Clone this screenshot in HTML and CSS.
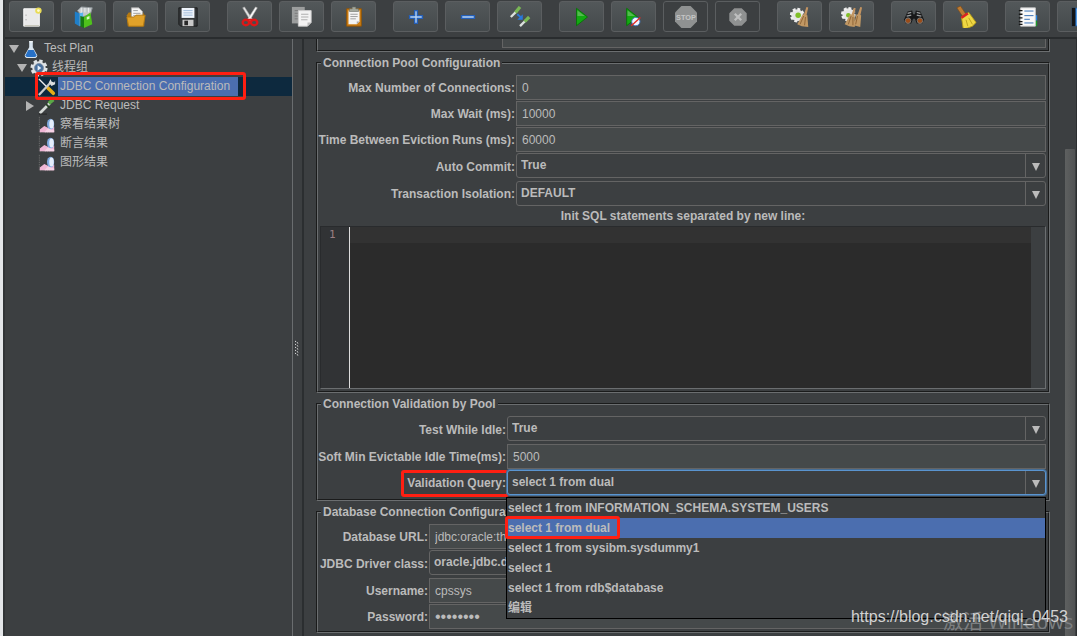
FILE: index.html
```html
<!DOCTYPE html>
<html lang="zh-CN">
<head>
<meta charset="utf-8">
<title>JDBC Connection Configuration</title>
<link rel="stylesheet" href="styles.css">
</head>
<body>
<div class="backdrop"></div>
<div class="app">
  <header class="toolbar">
    <div class="group">
      <button class="tool" aria-label="New"><svg viewBox="0 0 24 24"><path d="M3 3h17v19H3z" fill="#e9e9e9" stroke="#fff"/><path d="M4 21.500h16" stroke="#b9b9a9"/><path d="M5 10h1M5 15h1" stroke="#888"/><circle cx="19" cy="5" r="3.500" fill="#e9dc58"/><circle cx="19" cy="5" r="1.500" fill="#fffbd0"/></svg></button>
      <button class="tool" aria-label="Templates"><svg viewBox="0 0 24 24"><path d="M5 5l4-4 12 1-2 7-9 3z" fill="#c4c8ca" stroke="#8e9599"/><path d="M9 2v6M13 2v5M17 2v5" stroke="#eef1f2"/><path d="M2 6l5 2v14l-5-3z" fill="#1f7fc9"/><path d="M7 8l4-1v14l-4 1z" fill="#5bb5ee"/><path d="M8 11l4 1v12l-4-2z" fill="#167a12"/><path d="M12 12l7-5 1 6 1 7-9 4z" fill="#4fc21c"/><path d="M15 12l3-1v3l-3 1z" fill="#d9f6c8"/></svg></button>
      <button class="tool" aria-label="Open"><svg viewBox="0 0 24 24"><path d="M2 10l2-3h16l1 4v11H3z" fill="#b67a12"/><path d="M7 2h8l4 4v9H7z" fill="#f6f6f6" stroke="#aaa"/><path d="M9 5h5M9 8h8M9 10.500h8" stroke="#999"/><path d="M2 12h8l2-2h10l-2 12H4z" fill="#e0a129" stroke="#b57a10"/></svg></button>
      <button class="tool" aria-label="Save"><svg viewBox="0 0 24 24"><path d="M2 2h20v20H4l-2-2z" fill="#35383a" stroke="#191a1b"/><path d="M5 2h14v11H5z" fill="#eef4fb"/><path d="M7 5h10M7 7.500h10M7 10h10" stroke="#9bb7d8"/><path d="M6 15h12v7H6z" fill="#c9c9c9"/><path d="M8 16h4v5H8z" fill="#292929"/></svg></button>
    </div>
    <div class="group">
      <button class="tool" aria-label="Cut"><svg viewBox="0 0 24 24"><path d="M4 2l2-1 9 14-2 2z" fill="#e4e4e4" stroke="#a4a4a4" stroke-width=".6"/><path d="M20 2l-2-1-9 14 2 2z" fill="#f8f8f8" stroke="#aaa" stroke-width=".6"/><ellipse cx="7.500" cy="18" rx="3.500" ry="3" fill="none" stroke="#de1717" stroke-width="2.500"/><ellipse cx="16.500" cy="18" rx="3.500" ry="3" fill="none" stroke="#de1717" stroke-width="2.500"/><path d="M10 14h4l1 2H9z" fill="#de1717"/></svg></button>
      <button class="tool" aria-label="Copy"><svg viewBox="0 0 24 24"><path d="M1 1h14v18H1z" fill="#9b9d9d"/><path d="M4 5h8M4 8h4M4 11h4M4 14h4" stroke="#777"/><path d="M8 5h14v13l-4 4H8z" fill="#f3f3f3" stroke="#ccc"/><path d="M11 9h8M11 12h8M11 15h7" stroke="#aaa"/><path d="M18 22v-4h4z" fill="#bbb"/></svg></button>
      <button class="tool" aria-label="Paste"><svg viewBox="0 0 24 24"><path d="M4 3h16v19H4z" fill="#cd7e15" stroke="#905405"/><path d="M6 5h12v12l-3 3H6z" fill="#f4f4f4"/><path d="M8 9h8M8 11.500h8M8 14h6" stroke="#999"/><path d="M15 20v-3h3z" fill="#aaa"/><path d="M7 3h3V1h4v2h3v3H7z" fill="#a2a69b" stroke="#656960" stroke-width=".6"/></svg></button>
    </div>
    <div class="group">
      <button class="tool" aria-label="Expand all"><svg viewBox="0 0 24 24"><path d="M10.500 5h3v5.500H19v3h-5.500V19h-3v-5.500H5v-3h5.500z" fill="#b7d3f4" stroke="#245fb9" stroke-width="1.500"/></svg></button>
      <button class="tool" aria-label="Collapse all"><svg viewBox="0 0 24 24"><path d="M5 10.500h14v3H5z" fill="#b7d3f4" stroke="#245fb9" stroke-width="1.500"/></svg></button>
      <button class="tool" aria-label="Toggle"><svg viewBox="0 0 24 24"><path d="M2 12l7-7" stroke="#dce1de" stroke-width="2.500"/><path d="M7 7l5-6" stroke="#79b755" stroke-width="3.500"/><path d="M12 22l7-7" stroke="#dce1de" stroke-width="2.500"/><path d="M17 17l5-5" stroke="#79b755" stroke-width="3.500"/><path d="M9 9l5 4" stroke="#2878dc" stroke-width="2"/><path d="M15 9v6H9z" fill="#2878dc"/></svg></button>
    </div>
    <div class="group">
      <button class="tool" aria-label="Start"><svg viewBox="0 0 24 24"><path d="M6 2.500L18 12 6 21.500z" fill="#13a912" stroke="#087108"/><path d="M7 5l8 6H7z" fill="#55b850"/></svg></button>
      <button class="tool" aria-label="Start no pauses"><svg viewBox="0 0 24 24"><path d="M4 2.500L16 12 4 21.500z" fill="#13a912" stroke="#087108"/><path d="M5 5l8 6H5z" fill="#55b850"/><circle cx="14" cy="17" r="4.500" fill="#f2f6ff" stroke="#3d78c5"/><path d="M9 21.500l10-9" stroke="#e12b25" stroke-width="1.500"/></svg></button>
      <button class="tool flat" aria-label="Stop"><svg class="stop" viewBox="0 0 24 24"><path d="M7 0h10l7 7v10l-7 7H7l-7-7V7z" fill="#8f9191"/><text x="12" y="15">STOP</text></svg></button>
      <button class="tool flat" aria-label="Shutdown"><svg viewBox="0 0 24 24"><path d="M8 2.500h8L21.500 8v8L16 21.500H8L2.500 16V8z" fill="#8f9191"/><path d="M8.500 8.500l7 7M15.500 8.500l-7 7" stroke="#bebfbf" stroke-width="2.500"/></svg></button>
    </div>
    <div class="group">
      <button class="tool" aria-label="Clear"><svg viewBox="0 0 24 24"><circle cx="9" cy="10" r="6.500" fill="#e5e5e5" stroke="#eee" stroke-width="3" stroke-dasharray="3 2"/><circle cx="10" cy="10" r="3" fill="#80bf28"/><path d="M19 1l2 .5-2 9-3-.5z" fill="#c39461"/><path d="M15 9l5 1 1 13-7-1-5-2z" fill="#c19864"/><path d="M16 11l-4 9M18 12l-1 9" stroke="#8d6335"/></svg></button>
      <button class="tool" aria-label="Clear all"><svg viewBox="0 0 24 24"><circle cx="8" cy="9" r="6.500" fill="#e5e5e5" stroke="#eee" stroke-width="3" stroke-dasharray="3 2"/><circle cx="8" cy="10" r="2.500" fill="#80bf28"/><path d="M14 2l2 .5-2 9-3-.5zM21 1l2 .5-2 9-3-.5z" fill="#c39461"/><path d="M10 9l5 1v13l-6-1-5-2zM17 9l5 1-1 13-7-2z" fill="#c19864"/><path d="M11 11l-3 9M13 12v9M18 11l-2 9" stroke="#8d6335"/></svg></button>
    </div>
    <div class="group">
      <button class="tool" aria-label="Search"><svg viewBox="0 0 24 24"><path d="M5 6l5-1 1 4h2l1-4 5 1 4 9-2 4h-6l-2-5h-2l-2 5H3l-2-4z" fill="#171819"/><path d="M5 8l4-1M15 7l4 1M4 11l5-1M15 10l5 1" stroke="#9a9d9f" stroke-width="1.500"/><circle cx="5.500" cy="16" r="3" fill="#9a4c19" stroke="#77797a"/><circle cx="18.500" cy="16" r="3" fill="#9a4c19" stroke="#77797a"/></svg></button>
      <button class="tool" aria-label="Reset search"><svg viewBox="0 0 24 24"><path d="M2 2l4-2 6 9-4 2z" fill="#bd7b32" stroke="#7f4b16" stroke-width=".7"/><path d="M7 12l8-5 8 11-4 4-5 2-5 1z" fill="#efd743" stroke="#b59a18"/><path d="M12 15l2 7M15 13l4 7" stroke="#b89f1d"/><path d="M6 12l7-5 2 2-7 5z" fill="#db2222"/></svg></button>
    </div>
    <div class="group">
      <button class="tool" aria-label="Function helper"><svg viewBox="0 0 24 24"><path d="M19 10h3v6h-3z" fill="#2685e4"/><path d="M19 16h3v6h-3z" fill="#1c9a29"/><path d="M4 2h16v20H4z" fill="#fafafa" stroke="#ccc"/><path d="M8 5.500h10M8 10.500h10M8 14.500h6M8 18.500h10" stroke="#2a65ad"/><path d="M2 5h4M2 9h4M2 13h4M2 17h4M2 20h4" stroke="#161616" stroke-width="1.500"/></svg></button>
      <button class="tool" aria-label="Help"><svg viewBox="0 0 24 24"><path d="M3 2h18v20H3z" fill="#2674cc"/><path d="M3 2h4v20H3z" fill="#141516"/><path d="M8 3h2v18H8z" fill="#69aef0"/></svg></button>
    </div>
  </header>

  <main class="workspace">
    <nav class="tree">
      <div class="node"><span class="toggle open"></span><svg viewBox="0 0 20 20"><path d="M8 1h4v7l5 9q0 3-2 3H5q-2 0-2-3l5-9z" fill="#d8e4ef"/><path d="M7 11h6l3 6q0 2-2 2H6q-2 0-2-2z" fill="#2670c6"/><path d="M8 2h4" stroke="#fff"/></svg><span class="name">Test Plan</span></div>
      <div class="node level-1"><span class="toggle open"></span><svg viewBox="0 0 20 20"><circle cx="10" cy="10" r="7.500" fill="#dfe3e6" stroke="#dfe3e6" stroke-width="4" stroke-dasharray="3.500 2.390"/><circle cx="10" cy="10" r="5" fill="#48709f" stroke="#8291a5"/><path d="M8.500 7l4 3-4 3z" fill="#e5effa"/></svg><span class="name">线程组</span></div>
      <div class="node level-2 selected"><span class="toggle"></span><svg viewBox="0 0 20 20"><path d="M1 1l10 10" stroke="#eee" stroke-width="1.500"/><path d="M11 11l6 6" stroke="#e5ad18" stroke-width="4" stroke-linecap="round"/><path d="M1 19L14 5" stroke="#c8cbcc" stroke-width="2.500"/><path d="M12 5l2-4 1 3 3 1 1-2v4l-4 2z" fill="#dedfdf"/></svg><span class="name">JDBC Connection Configuration</span></div>
      <div class="node level-2"><span class="toggle closed"></span><svg viewBox="0 0 20 20"><path d="M2 18L13 7" stroke="#d5d9d7" stroke-width="3"/><path d="M9 8l4 4" stroke="#263f24" stroke-width="2"/><path d="M12 7l5-4" stroke="#5aa846" stroke-width="4"/><path d="M1 19h9" stroke="#222"/></svg><span class="name">JDBC Request</span></div>
      <div class="node level-2"><span class="toggle"></span><svg viewBox="0 0 20 20"><use href="#chart"/></svg><span class="name">察看结果树</span></div>
      <div class="node level-2"><span class="toggle"></span><svg viewBox="0 0 20 20"><use href="#chart"/></svg><span class="name">断言结果</span></div>
      <div class="node level-2"><span class="toggle"></span><svg viewBox="0 0 20 20"><use href="#chart"/></svg><span class="name">图形结果</span></div>
    </nav>
    <div class="divider"><svg viewBox="0 0 5 16"><path d="M0 1l4 3M0 4l4 3M0 7l4 3M0 10l4 3M0 13l4 3" stroke="#e5e5e5" stroke-dasharray="1.500 1"/></svg></div>

    <form class="panel">
      <div class="cut"><input class="text" aria-label="Variable Name"></div>

      <fieldset class="box pool">
        <legend>Connection Pool Configuration</legend>
        <label for="max">Max Number of Connections:</label><input class="text" id="max" value="0">
        <label for="wait">Max Wait (ms):</label><input class="text" id="wait" value="10000">
        <label for="evict">Time Between Eviction Runs (ms):</label><input class="text" id="evict" value="60000">
        <label for="commit">Auto Commit:</label>
        <div class="combo gap-after"><select id="commit"><option>True</option></select><i></i></div>
        <label for="isolation">Transaction Isolation:</label>
        <div class="combo"><select id="isolation"><option>DEFAULT</option></select><i></i></div>
        <label class="wide" for="sql">Init SQL statements separated by new line:</label>
        <div class="editor"><span class="line-no">1</span><textarea id="sql"></textarea></div>
      </fieldset>

      <fieldset class="box validation">
        <legend>Connection Validation by Pool</legend>
        <label for="idle">Test While Idle:</label>
        <div class="combo gap-after"><select id="idle"><option>True</option></select><i></i></div>
        <label for="soft">Soft Min Evictable Idle Time(ms):</label><input class="text" id="soft" value="5000">
        <label class="marked" for="query">Validation Query:</label>
        <div class="combo focused"><select id="query"><option>select 1 from dual</option></select><i></i>
          <ul class="popup" role="listbox">
            <li role="option">select 1 from INFORMATION_SCHEMA.SYSTEM_USERS</li>
            <li role="option" class="current" aria-selected="true">select 1 from dual</li>
            <li role="option">select 1 from sysibm.sysdummy1</li>
            <li role="option">select 1</li>
            <li role="option">select 1 from rdb$database</li>
            <li role="option">编辑</li>
          </ul>
        </div>
      </fieldset>

      <fieldset class="box database">
        <legend>Database Connection Configuration</legend>
        <label for="url">Database URL:</label><input class="text" id="url" value="jdbc:oracle:thin">
        <label for="driver">JDBC Driver class:</label>
        <div class="combo gap-after"><select id="driver"><option>oracle.jdbc.driver</option></select><i></i></div>
        <label for="user">Username:</label><input class="text" id="user" value="cpssys">
        <label for="pass">Password:</label><input class="text" id="pass" type="password" value="password">
      </fieldset>
    </form>
    <div class="scrollbar"><div class="thumb"></div></div>
  </main>
</div>
<div class="activate">激活 Windows</div>
<div class="watermark">https://blog.csdn.net/qiqi_0453</div>
<svg class="defs"><defs><g id="chart"><path d="M1.500 1v17.500H18" fill="none" stroke="#777" stroke-dasharray="1 1"/><path d="M2 18v-3l5-4 4 2 7-1v6z" fill="#f0b6d6"/><ellipse cx="14" cy="9" rx="4" ry="6" fill="#7fa9e0"/><ellipse cx="15" cy="9" rx="2.500" ry="5" fill="#e6eefb"/><path d="M7 18l4-4 7 2v2z" fill="#f6d3e6"/></g></defs></svg>
</body>
</html>
```
FILE: styles.css
```css
*, *::before, *::after { box-sizing: border-box; }

body {
  margin: 0;
  height: 100vh;
  display: flex;
  overflow: hidden;
  position: relative;
  background: #3c3f41;
  color: #bbbbbb;
  font: bold 12px/16px "Liberation Sans", "Noto Sans CJK SC", sans-serif;
}

input, select, textarea, button { font: inherit; color: inherit; margin: 0; }

.backdrop { width: 3px; background: #e4e6e8; }
.app { flex: 1; min-width: 0; display: flex; flex-direction: column; border-left: 2px solid #313436; }

/* Toolbar */
.toolbar {
  flex: none;
  display: flex;
  gap: 17px;
  height: 39px;
  padding: 1px 0 0 4px;
  border-bottom: 2px solid #292c2e;
  overflow: hidden;
}
.group { display: flex; gap: 7px; flex: none; }
.tool {
  width: 45px;
  height: 31px;
  padding: 0;
  display: grid;
  place-items: center;
  border: 1px solid #5b5e60;
  border-radius: 3px;
  background: linear-gradient(#53585a, #44494b);
}
.tool.flat { background: #3c3f41; }
.tool svg { width: 22px; height: 22px; }
.stop text { font: bold 8px "Liberation Sans", sans-serif; fill: #c4c5c5; text-anchor: middle; }

/* Tree */
.workspace { flex: 1; min-height: 0; display: flex; }
.tree { width: 288px; flex: none; border-right: 1px solid #6a6d6f; font-weight: normal; }
.node { height: 19px; padding-left: 4px; display: flex; align-items: center; }
.node svg { width: 18px; height: 18px; margin: 0 2px; flex: none; }
.level-1 { padding-left: 12px; }
.level-2 { padding-left: 20px; }
.toggle { width: 10px; margin-right: 1px; display: grid; place-items: center; }
.open::before { content: ""; border: 5px solid transparent; border-top: 8px solid #b3b3b3; border-bottom: 0; }
.closed::before { content: ""; border: 5px solid transparent; border-left: 8px solid #b3b3b3; border-right: 0; }
.name { line-height: 19px; padding: 0 8px 0 2px; }
.selected { background: #0d293e; position: relative; }
.selected .name { background: #4b6eaf; }
.selected::after, .marked::after, .current::after {
  content: "";
  position: absolute;
  border: 3px solid #ff1f12;
  border-radius: 3px;
}
.selected::after { left: 30px; top: -5px; width: 211px; height: 28px; }

.divider {
  width: 11px;
  flex: none;
  padding-top: 20px;
  display: grid;
  place-items: center;
  border-right: 2px solid #2b2e30;
}
.divider svg { width: 5px; height: 16px; }

/* Form */
.panel { flex: 1; min-width: 0; padding: 0 15px 0 12px; }
.cut {
  height: 13px;
  padding: 0 2px 0 184px;
  border: 2px groove #6b6e70;
  border-top: 0;
  margin-bottom: 3px;
}
.cut .text { height: 9px; border-top: 0; }
.box {
  min-width: 0;
  margin: 0 0 3px;
  padding: 4px 2px 2px;
  border: 2px groove #6b6e70;
  display: grid;
  row-gap: 1px;
  column-gap: 1px;
  align-items: center;
}
.pool { grid-template-columns: 195px 1fr; }
.validation { grid-template-columns: 186px 1fr; padding-bottom: 4px; }
.database { grid-template-columns: 108px 1fr; }
.box legend { padding: 0 2px; margin-left: 1px; }
.box label { display: flex; justify-content: flex-end; white-space: nowrap; }
.box .wide { grid-column: 1 / -1; justify-content: center; line-height: 18px; }
.text {
  width: 100%;
  height: 25px;
  padding: 0 5px;
  border: 1px solid #646464;
  background: #45494a;
  font-weight: normal;
  outline: 0;
  display: block;
}
.text[type="password"] { font-size: 16px; }
.combo { position: relative; height: 25px; }
.gap-after { margin-bottom: 2px; }
.combo select {
  appearance: none;
  width: 100%;
  height: 25px;
  padding: 0 24px 2px 4px;
  border: 1px solid #646464;
  border-radius: 3px;
  background: #3c3f41;
  outline: 0;
  display: block;
}
.combo i {
  position: absolute;
  right: 1px;
  top: 1px;
  bottom: 1px;
  width: 20px;
  padding-top: 3px;
  border-left: 1px solid #646464;
  display: grid;
  place-items: center;
  pointer-events: none;
}
.combo i::before { content: ""; border: 4px solid transparent; border-top: 8px solid #bbbbbb; border-bottom: 0; }
.focused select { border-color: #5a94cf; box-shadow: 0 0 0 1px #466d94; }

.editor {
  grid-column: 1 / -1;
  display: flex;
  height: 163px;
  border: 1px solid #292b2d;
  border-right-color: #6b6e70;
  border-bottom-color: #6b6e70;
  background: #2b2b2b;
}
.line-no { width: 28px; padding-left: 8px; background: #313335; color: #9a7f83; font: 11px/16px "DejaVu Sans Mono", monospace; }
.editor textarea {
  flex: 1;
  padding: 0;
  border: 0;
  border-left: 1px solid #dddddd;
  resize: none;
  outline: 0;
  background: linear-gradient(#323232 16px, #2b2b2b 16px);
}
.editor::after { content: ""; width: 14px; background: #3c3f41; }

.marked { position: relative; }
.marked::after { right: -3px; top: -5px; width: 108px; height: 27px; }

.popup {
  position: absolute;
  z-index: 2;
  left: -1px;
  right: 0;
  top: 27px;
  margin: 0;
  padding: 0;
  list-style: none;
  border: 1px solid #000;
  background: #3c3f41;
}
.popup li { height: 20px; line-height: 20px; padding-left: 1px; }
.popup .current { background: #4b6eaf; position: relative; }
.current::after { left: -2px; top: -2px; width: 115px; height: 23px; }

.scrollbar { width: 12px; flex: none; padding-top: 110px; display: flex; border-right: 1px solid #2b2e30; }
.thumb { width: 10px; background: linear-gradient(90deg, #5e6060, #515354); border-radius: 1px 1px 0 0; }

.watermark, .activate { position: absolute; z-index: 3; white-space: nowrap; font-weight: normal; }
.watermark { right: 9px; bottom: 8px; color: #d2d2d2; font-size: 16px; line-height: 22px; }
.activate { left: 943px; bottom: 0; color: #7d8082; font-family: "Open Sans", "Noto Sans CJK SC", sans-serif; font-size: 20px; line-height: 28px; }
.defs { position: absolute; width: 0; height: 0; }
```
